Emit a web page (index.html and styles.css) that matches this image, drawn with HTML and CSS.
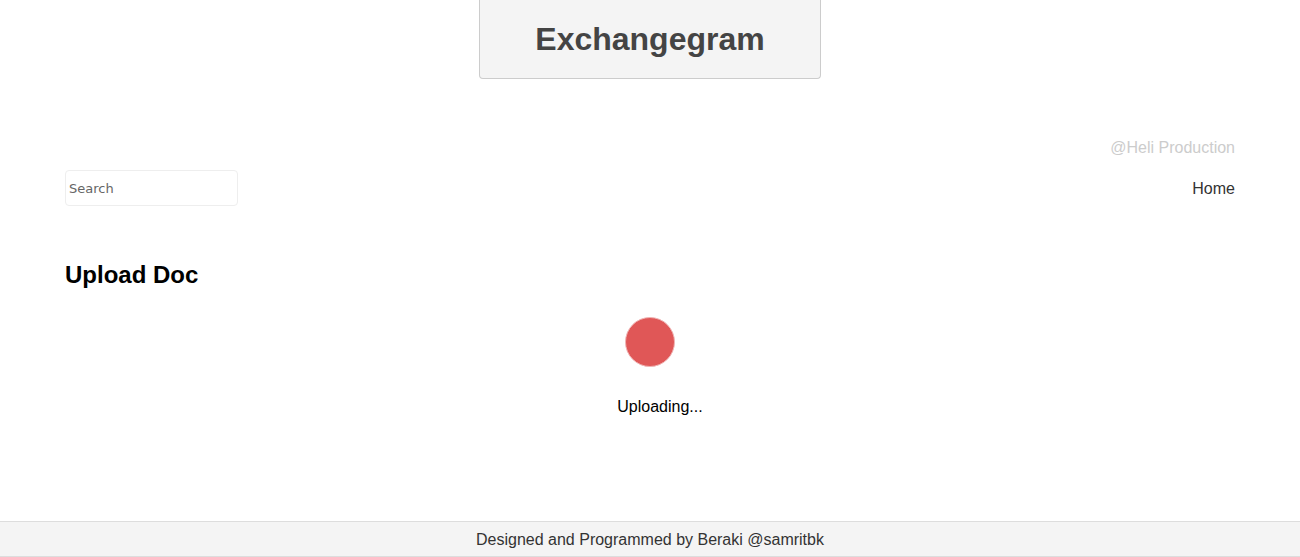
FILE: index.html
```html
<!DOCTYPE html>
<html>
<head>
<meta charset="utf-8">
<link rel="stylesheet" href="styles.css">
</head>
<body>
<div class="page">
  <header class="brand-wrap">
    <div class="brand"><h1>Exchangegram</h1></div>
  </header>
  <div class="container">
    <div class="credit">@Heli Production</div>
    <nav class="nav">
      <input class="search" type="text" placeholder="Search">
      <a class="home" href="#">Home</a>
    </nav>
    <h2 class="title">Upload Doc</h2>
    <div class="loader">
      <div class="dot"></div>
      <div class="loading-text">Uploading...</div>
    </div>
  </div>
</div>
<footer class="footer">Designed and Programmed by Beraki @samritbk</footer>
</body>
</html>
```
FILE: styles.css
```css
html, body {
  margin: 0;
  padding: 0;
  background: #fff;
  font-family: "Liberation Sans", Arial, sans-serif;
  color: #333;
}
.page {
  height: 521px;
}
.brand-wrap {
  display: flex;
  justify-content: center;
}
.brand {
  width: 340px;
  height: 78px;
  background: #f4f4f4;
  border: 1px solid #ccc;
  border-top: none;
  border-radius: 0 0 4px 4px;
  display: flex;
  align-items: center;
  justify-content: center;
}
.brand h1 {
  margin: 0;
  font-size: 32px;
  font-weight: bold;
  color: #444;
  line-height: 1;
}
.container {
  padding: 0 65px;
}
.credit {
  margin-top: 59px;
  text-align: right;
  color: #ccc;
  font-size: 16px;
  line-height: 20px;
}
.nav {
  margin-top: 12px;
  display: flex;
  justify-content: space-between;
  align-items: center;
}
.search {
  width: 173px;
  height: 36px;
  box-sizing: border-box;
  border: 1px solid #eee;
  border-radius: 4px;
  padding: 0 3px;
  font-family: "DejaVu Sans", sans-serif;
  font-size: 13px;
  color: #555;
  outline: none;
}
.search::placeholder {
  color: #666;
}
.home {
  padding-top: 2px;
  color: #333;
  text-decoration: none;
  font-size: 16px;
}
.title {
  margin: 55px 0 0;
  font-size: 24px;
  font-weight: bold;
  color: #000;
  line-height: 28px;
}
.loader {
  display: flex;
  flex-direction: column;
  align-items: center;
  margin-top: 28px;
}
.dot {
  width: 48px;
  height: 48px;
  border-radius: 50%;
  background: #e05757;
  border: 1px solid #f0b4b4;
}
.loading-text {
  margin-top: 30px;
  padding-left: 20px;
  font-size: 16px;
  color: #000;
  line-height: 20px;
}
.footer {
  height: 33px;
  padding-top: 1px;
  background: #f4f4f4;
  border-top: 1px solid #ddd;
  border-bottom: 1px solid #ddd;
  text-align: center;
  font-size: 16px;
  line-height: 34px;
  color: #333;
}
```
